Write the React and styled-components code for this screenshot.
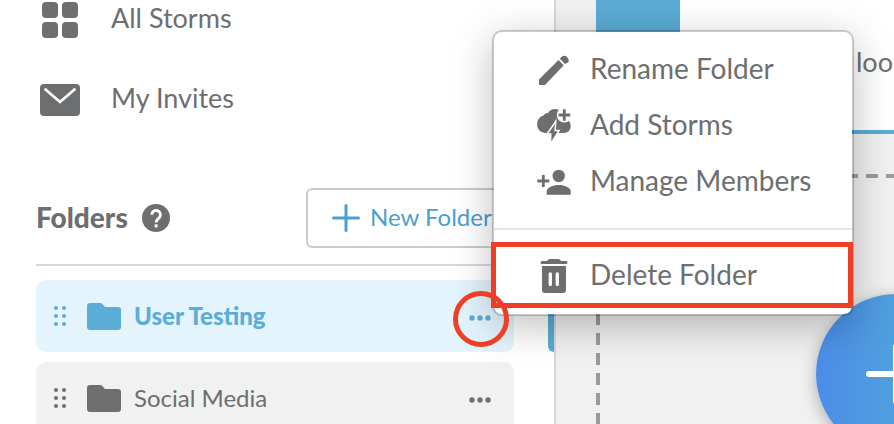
import React from "react";
import styled, { createGlobalStyle } from "styled-components";

const ink = "#6d6e70";
const sky = "#5bacd6";
const alert = "#ee3f26";

const Global = createGlobalStyle`
  *, *::before, *::after { box-sizing: border-box; }
  body {
    margin: 0;
    overflow: hidden;
    font-family: Lato, "Open Sans", sans-serif;
    color: ${ink};
    background: #fff;
  }
  button { font: inherit; color: inherit; background: none; border: 0; padding: 0; cursor: pointer; }
  svg { display: block; flex: none; }
`;

const Page = styled.div`
  position: relative;
  display: flex;
  height: 100vh;
  overflow: hidden;
`;

const Sidebar = styled.aside`
  flex: none;
  width: 556px;
  padding: 0 40px 0 36px;
  border-right: 2px solid #d5d8dc;
  background: #fff;
`;

const Nav = styled.nav`
  display: grid;
  gap: 40px;
`;

const NavLink = styled.a`
  display: flex;
  align-items: center;
  gap: 30px;
  height: 40px;
  padding-left: 3px;
  color: inherit;
  text-decoration: none;
  font-size: 27px;
  line-height: 36px;
  white-space: nowrap;
`;

const NavLabel = styled.span`
  padding-bottom: 4px;
`;

const FoldersHeader = styled.header`
  display: flex;
  align-items: center;
  justify-content: space-between;
  margin-top: 68px;
  padding-bottom: 16px;
  border-bottom: 2px solid #d5d8dc;
`;

const FoldersTitle = styled.div`
  display: flex;
  align-items: center;
  gap: 14px;
`;

const Heading = styled.h2`
  margin: 0;
  padding-bottom: 2px;
  font-size: 28px;
  line-height: 36px;
  font-weight: 900;
`;

const NewFolderButton = styled.button`
  && {
    display: flex;
    align-items: center;
    gap: 10px;
    width: 208px;
    height: 60px;
    padding-left: 24px;
    border: 2px solid #cbcbcb;
    border-radius: 6px;
    color: #4a9fd1;
    font-size: 24px;
    line-height: 36px;
    white-space: nowrap;
  }
`;

const FolderList = styled.ul`
  display: grid;
  gap: 10px;
  margin: 14px 0 0;
  padding: 0;
  list-style: none;
`;

const FolderRow = styled.li`
  position: relative;
  display: flex;
  align-items: center;
  height: 72px;
  padding: 0 18px;
  border-radius: 10px;
  background: ${(p) => (p.$active ? "#e3f4fd" : "#f1f1f1")};
  color: ${(p) => (p.$active ? sky : ink)};
  font-weight: ${(p) => (p.$active ? 900 : 400)};
`;

const ActiveMarker = styled.span`
  position: absolute;
  top: 0;
  bottom: 0;
  right: -40px;
  width: 6px;
  border-radius: 6px 0 0 6px;
  background: ${sky};
`;

const FolderName = styled.span`
  flex: 1;
  margin-left: 13px;
  font-size: 24px;
  line-height: 36px;
`;

const FolderGlyph = styled.svg`
  margin-left: 21px;
`;

const MoreButton = styled.button`
  position: relative;
  margin-top: 4px;
`;

const Ring = styled.span`
  position: absolute;
  z-index: 3;
  inset: -21px -13px -23px -11px;
  border: 5px solid ${alert};
  border-radius: 50%;
`;

const Main = styled.main`
  flex: 1;
  min-width: 0;
  padding-left: 40px;
  background: #f1f1f1;
`;

const StormCard = styled.article`
  display: flex;
  height: 134px;
  border-bottom: 4px solid ${sky};
  background: #fff;
`;

const StormThumb = styled.div`
  flex: none;
  width: 84px;
  background: ${sky};
`;

const StormText = styled.p`
  flex: 1;
  margin: 44px 0 0 176px;
  font-size: 27px;
  line-height: 36px;
  white-space: nowrap;
`;

const DropZone = styled.div`
  height: 300px;
  margin-top: 40px;
  background:
    linear-gradient(90deg, #9b9b9b 12px, transparent 12px) 10px 0 / 20px 4px repeat-x,
    linear-gradient(#9b9b9b 12px, transparent 12px) 0 -1px / 4px 20px repeat-y;
`;

const AddButton = styled.button`
  && {
    position: absolute;
    top: 294px;
    right: -82px;
    display: grid;
    place-items: center;
    width: 160px;
    height: 160px;
    border-radius: 50%;
    background: linear-gradient(90deg, #4b8de9, #55b3d2);
    box-shadow: 0 4px 16px rgba(0, 0, 0, 0.3);
    color: #fff;
  }
`;

const Menu = styled.div`
  position: absolute;
  z-index: 2;
  top: 30px;
  left: 492px;
  width: 362px;
  padding: 9px 0 6px;
  border: 2px solid rgba(0, 0, 0, 0.2);
  border-radius: 10px;
  background: #fff;
  background-clip: padding-box;
  box-shadow: 0 10px 40px rgba(0, 0, 0, 0.26);
`;

const MenuItem = styled.button`
  && {
    display: flex;
    align-items: center;
    gap: 18px;
    width: 100%;
    height: 56px;
    padding-left: 42px;
    font-size: 28px;
    line-height: 36px;
    text-align: left;
    white-space: nowrap;
  }
`;

const MenuLabel = styled.span`
  padding-bottom: 2px;
`;

const Divider = styled.hr`
  height: 2px;
  margin: 19px 0 12px;
  border: 0;
  background: #e3e3e3;
`;

const Highlight = styled.div`
  margin: 0 -1px 0 -3px;
  padding: 5px 0 5px 3px;
  outline: 5px solid ${alert};
  outline-offset: -5px;
`;

const Dots = ({ xs, ys, r, w, h }) => (
  <svg width={w} height={h} fill="currentColor" aria-hidden="true">
    {ys.map((y) => xs.map((x) => <circle key={`${x}-${y}`} cx={x} cy={y} r={r} />))}
  </svg>
);

const GridIcon = () => (
  <svg width="42" height="40" fill="currentColor" aria-hidden="true">
    <rect x="3" y="2" width="16" height="16" rx="4" />
    <rect x="23" y="2" width="16" height="16" rx="4" />
    <rect x="3" y="22" width="16" height="16" rx="4" />
    <rect x="23" y="22" width="16" height="16" rx="4" />
  </svg>
);

const MailIcon = () => (
  <svg width="42" height="40" aria-hidden="true">
    <rect x="1" y="4" width="40" height="32" rx="4" fill="currentColor" />
    <path d="M6.500 9.500 21 22 35.500 9.500" fill="none" stroke="#fff" strokeWidth="2.800" strokeLinecap="round" />
  </svg>
);

const HelpIcon = () => (
  <svg width="28" height="28" viewBox="0 0 28 28" role="img" aria-label="Help">
    <circle cx="14" cy="14" r="14" fill="currentColor" />
    <path d="M9.800 10.800a4.300 4.300 0 1 1 7.600 2.700c-1.400 1.600-3.200 2.300-3.200 5" fill="none" stroke="#fff" strokeWidth="2.800" />
    <rect x="12.600" y="20.400" width="3" height="3" fill="#fff" />
  </svg>
);

const PlusIcon = ({ size, stroke }) => (
  <svg width={size} height={size} viewBox={`0 0 ${size} ${size}`} aria-hidden="true">
    <path
      d={`M${stroke / 2} ${size / 2}H${size - stroke / 2}M${size / 2} ${stroke / 2}V${size - stroke / 2}`}
      stroke="currentColor"
      strokeWidth={stroke}
      strokeLinecap="round"
    />
  </svg>
);

const FolderIcon = () => (
  <FolderGlyph width="34" height="27" viewBox="0 0 34 27" fill="currentColor" aria-hidden="true">
    <path d="M3 0H13Q14.500 0 15.500 1.200L18 4H31Q34 4 34 7V24Q34 27 31 27H3Q0 27 0 24V3Q0 0 3 0Z" />
  </FolderGlyph>
);

const PencilIcon = () => (
  <svg width="36" height="36" fill="currentColor" aria-hidden="true">
    <path d="M3 28.500 22.500 9 27.700 14.200 9 34H3Z" />
    <path d="M23.800 7.700 26 5.500Q28 4 30.200 5.200L32 7.200Q33.600 9.400 32.300 11.200L29 13Z" />
  </svg>
);

const StormIcon = () => (
  <svg width="36" height="36" aria-hidden="true">
    <path
      d="M9 26A8 8 0 0 1 1.200 17C1.200 12.500 4 9.500 7.500 8.500C8.500 6.500 10.500 5.700 12 6C13.500 3.300 16 2 19 2C24 2 27.500 5.500 28 11C32 12 34.700 15 34.700 19C34.700 23 32 26 28 26Z"
      fill="currentColor"
    />
    <circle cx="28.300" cy="8" r="7.500" fill="#fff" />
    <path d="M28.300 2.300V13.700M22.600 8H34.300" stroke="currentColor" strokeWidth="2.800" />
    <path d="M18.800 17 12.500 26.300H15.500L15.300 34.500 21.800 24.300H18.300Z" fill="currentColor" stroke="#fff" strokeWidth="3" paintOrder="stroke" />
  </svg>
);

const AddPersonIcon = () => (
  <svg width="36" height="36" fill="currentColor" aria-hidden="true">
    <circle cx="22.700" cy="13" r="6.200" />
    <path d="M10.700 31.700V28.500C10.700 24.500 17 22 22.700 22S34.700 24.500 34.700 28.500V31.700Z" />
    <path d="M7.300 12V24M1.300 18H13.300" stroke="currentColor" strokeWidth="2.800" />
  </svg>
);

const TrashIcon = () => (
  <svg width="36" height="36" fill="currentColor" aria-hidden="true">
    <path d="M6 4H11Q12 2 14 2H22Q24 2 25 4H30Q31.500 4 31.500 5.500T30 7H6Q4.500 7 4.500 5.500T6 4Z" />
    <path d="M6 9H30V33Q30 36 27 36H9Q6 36 6 33Z" />
    <path d="M14.300 17V27.500M21.300 17V27.500" stroke="#fff" strokeWidth="3.300" strokeLinecap="round" />
  </svg>
);

const Folder = ({ name, active }) => (
  <FolderRow $active={active}>
    <Dots w={12} h={20} xs={[2, 10]} ys={[2, 10, 18]} r={2} />
    <FolderIcon />
    <FolderName>{name}</FolderName>
    <MoreButton aria-label={`Options for ${name}`}>
      <Dots w={32} h={12} xs={[8, 16, 24]} ys={[6]} r={2.7} />
      {active && <Ring />}
    </MoreButton>
    {active && <ActiveMarker />}
  </FolderRow>
);

const Action = ({ icon, label }) => (
  <MenuItem role="menuitem">
    {icon}
    <MenuLabel>{label}</MenuLabel>
  </MenuItem>
);

export default function App() {
  return (
    <Page>
      <Global />
      <Sidebar>
        <Nav>
          <NavLink href="#storms"><GridIcon /><NavLabel>All Storms</NavLabel></NavLink>
          <NavLink href="#invites"><MailIcon /><NavLabel>My Invites</NavLabel></NavLink>
        </Nav>
        <FoldersHeader>
          <FoldersTitle><Heading>Folders</Heading><HelpIcon /></FoldersTitle>
          <NewFolderButton><PlusIcon size={28} stroke={3} /><MenuLabel>New Folder</MenuLabel></NewFolderButton>
        </FoldersHeader>
        <FolderList>
          <Folder name="User Testing" active />
          <Folder name="Social Media" />
        </FolderList>
      </Sidebar>
      <Main>
        <StormCard>
          <StormThumb />
          <StormText>loo</StormText>
        </StormCard>
        <DropZone />
      </Main>
      <AddButton aria-label="Add storm">
        <PlusIcon size={60} stroke={6} />
      </AddButton>
      <Menu role="menu">
        <Action icon={<PencilIcon />} label="Rename Folder" />
        <Action icon={<StormIcon />} label="Add Storms" />
        <Action icon={<AddPersonIcon />} label="Manage Members" />
        <Divider />
        <Highlight>
          <Action icon={<TrashIcon />} label="Delete Folder" />
        </Highlight>
      </Menu>
    </Page>
  );
}
